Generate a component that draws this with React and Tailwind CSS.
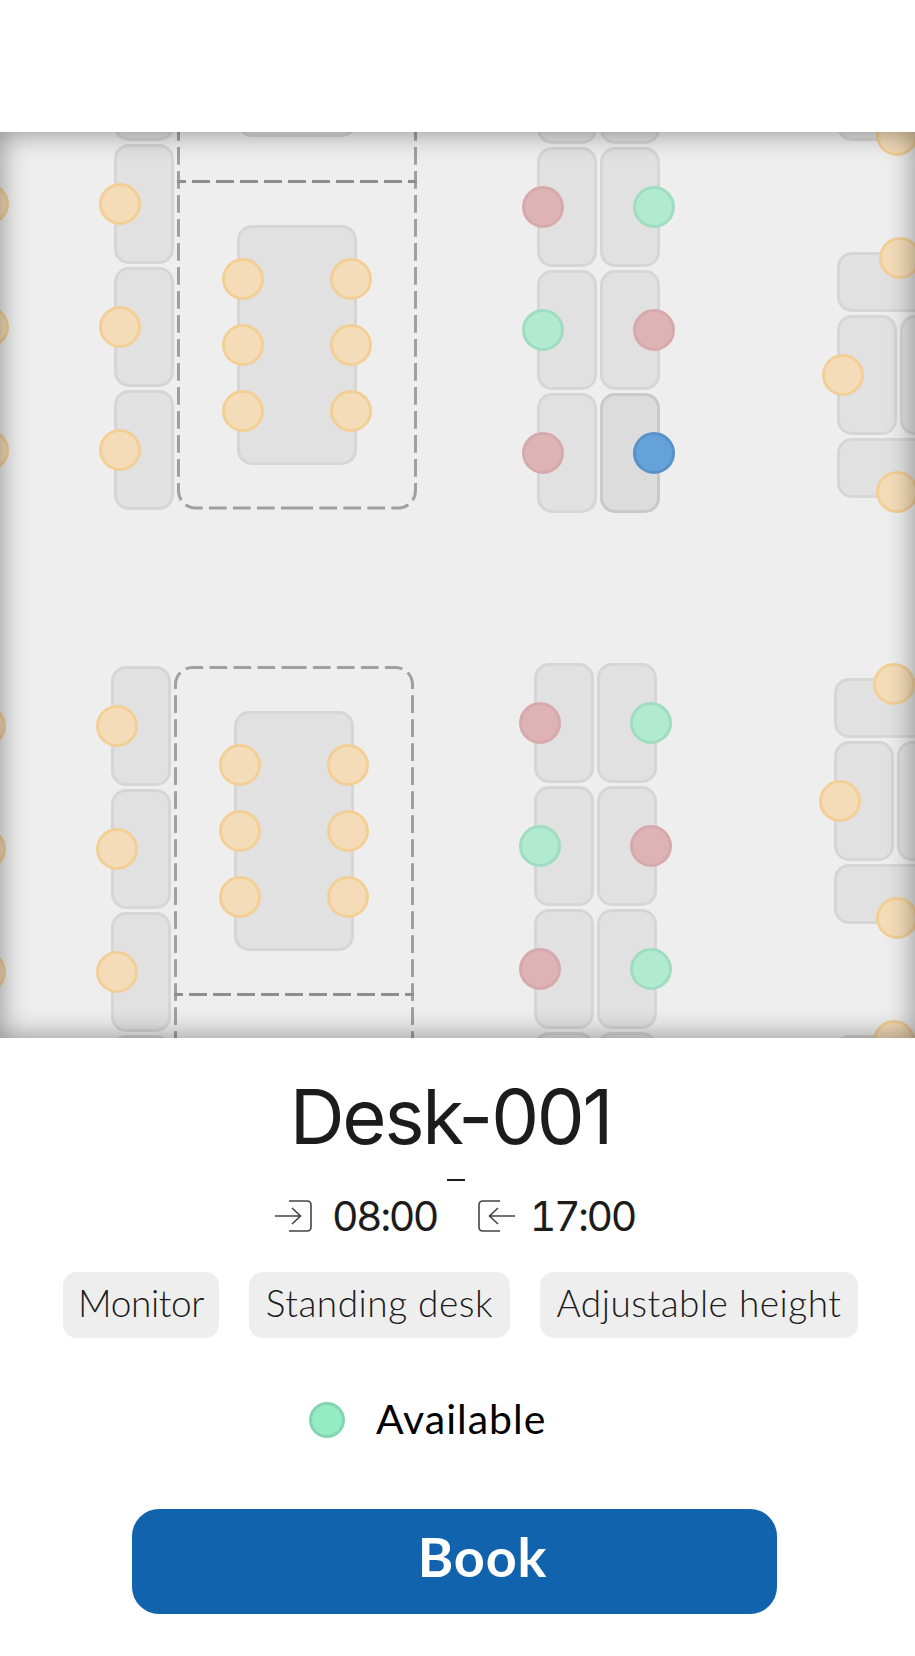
import { useState } from "react";

const MAP_TOP = 132;

const COLORS = {
  busy: "bg-[#ddb3b5] border-[#d6aaac]",
  free: "bg-[#b0ebd1] border-[#a0dcc0]",
  mine: "bg-[#65a2da] border-[#5793c9]",
  off: "bg-[#f4dcb8] border-[#f3cf96]",
};

// page coordinates, x y w h
const desks = [
  [114, 21], [114, 144], [114, 267], [114, 390],
  [537, 24], [600, 24], [537, 147], [600, 147], [537, 270], [600, 270], [537, 393],
  [111, 666], [111, 789], [111, 912], [111, 1035],
  [534, 663], [597, 663], [534, 786], [597, 786], [534, 909], [597, 909], [534, 1032], [597, 1032],
  [837, 315], [900, 315], [834, 741], [897, 741],
].map(([x, y]) => ({ x, y, w: 60, h: 120 }));

const wideDesks = [
  [837, 81], [837, 252], [837, 438], [834, 678], [834, 864], [834, 1035],
].map(([x, y]) => ({ x, y, w: 120, h: 60 }));

const tables = [
  { x: 237, y: -103, w: 120, h: 240 },
  { x: 237, y: 225, w: 120, h: 240 },
  { x: 234, y: 711, w: 120, h: 240 },
];

const dots = [
  // left edge
  [-33, 183, "off"], [-33, 306, "off"], [-33, 429, "off"],
  [-36, 705, "off"], [-36, 828, "off"], [-36, 951, "off"],
  // top left column
  [99, 183, "off"], [99, 306, "off"], [99, 429, "off"],
  // top table
  [222, 258, "off"], [330, 258, "off"], [222, 324, "off"], [330, 324, "off"], [222, 390, "off"], [330, 390, "off"],
  // top middle
  [522, 186, "busy"], [633, 186, "free"], [522, 309, "free"], [633, 309, "busy"], [522, 432, "busy"], [633, 432, "mine"],
  // top right
  [876, 114, "off"], [879, 237, "off"], [822, 354, "off"], [876, 471, "off"],
  // bottom left column
  [96, 705, "off"], [96, 828, "off"], [96, 951, "off"],
  // bottom table
  [219, 744, "off"], [327, 744, "off"], [219, 810, "off"], [327, 810, "off"], [219, 876, "off"], [327, 876, "off"],
  // bottom middle
  [519, 702, "busy"], [630, 702, "free"], [519, 825, "free"], [630, 825, "busy"], [519, 948, "busy"], [630, 948, "free"],
  // bottom right
  [873, 663, "off"], [819, 780, "off"], [876, 897, "off"], [873, 1020, "off"],
];

const features = [
  { label: "Monitor", className: "w-[156px] tracking-[-0.4px]" },
  { label: "Standing desk", className: "w-[261px] tracking-[0.5px]" },
  { label: "Adjustable height", className: "w-[318px] tracking-[0.5px]" },
];

function Desk({ x, y, w, h, selected }) {
  return (
    <div
      className={`absolute rounded-[15px] border-[3px] ${
        selected ? "bg-[#dcdcdc] border-[#c9c9c9]" : "bg-[#e1e1e1] border-[#d6d6d6]"
      }`}
      style={{ left: x, top: y - MAP_TOP, width: w, height: h }}
    />
  );
}

// dashed outlines of the two meeting areas, drawn in page coordinates
function RoomLines() {
  return (
    <svg className="absolute left-0 top-0" width="915" height="906" viewBox="0 132 915 906" fill="none" strokeWidth="3">
      <g stroke="#a0a0a0" strokeDasharray="17.7 6.3">
        <path d="M178.5 123 V491 A17 17 0 0 0 195.5 508 H297" />
        <path d="M415.5 123 V491 A17 17 0 0 1 398.5 508 H297" />
        <path d="M175.5 1337 V684.5 A17 17 0 0 1 192.5 667.5 H294" />
        <path d="M412.5 1337 V684.5 A17 17 0 0 0 395.5 667.5 H294" />
      </g>
      <g stroke="#8e8e8e" strokeDasharray="18 6" strokeDashoffset="9">
        <path d="M177 181.5 H417" />
        <path d="M174 994.5 H414" />
      </g>
    </svg>
  );
}

function Dot({ x, y, kind }) {
  return (
    <div
      className={`absolute w-[42px] h-[42px] rounded-full border-[3px] ${COLORS[kind]}`}
      style={{ left: x, top: y - MAP_TOP }}
    />
  );
}

function EnterIcon() {
  return (
    <svg width="37" height="32" viewBox="0 0 37 32" fill="none" stroke="#444444" strokeWidth="1.6">
      <path d="M0 16 H25 M17 8 L25.5 16 L17 24" />
      <path d="M14 1 H32 Q36 1 36 5 V27 Q36 31 32 31 H14" />
    </svg>
  );
}

function ExitIcon() {
  return (
    <svg width="37" height="32" viewBox="0 0 37 32" fill="none" stroke="#444444" strokeWidth="1.6">
      <path d="M37 16 H12 M20 8 L11.5 16 L20 24" />
      <path d="M22 1 H5 Q1 1 1 5 V27 Q1 31 5 31 H22" />
    </svg>
  );
}

export default function App() {
  const [booked, setBooked] = useState(false);

  return (
    <div className="w-[915px] h-[1656px] bg-white overflow-hidden font-['Lato',sans-serif]">
      <div className="h-[132px]" />

      {/* Floor plan */}
      <div className="relative h-[906px] bg-[#eeeeee] overflow-hidden">
        <RoomLines />
        {desks.map((d, i) => (
          <Desk key={i} {...d} />
        ))}
        <Desk x={600} y={393} w={60} h={120} selected />
        {wideDesks.map((d, i) => (
          <Desk key={i} {...d} />
        ))}
        {tables.map((t, i) => (
          <Desk key={i} {...t} />
        ))}
        {dots.map(([x, y, kind], i) => (
          <Dot key={i} x={x} y={y} kind={kind} />
        ))}
        <div className="absolute inset-0 shadow-[inset_0_0_28px_rgba(0,0,0,0.42)]" />
      </div>

      {/* Desk details */}
      <h1 className="mt-[33px] pr-[14px] text-center text-[76px] leading-[90px] font-normal tracking-[-2.2px] text-[#1c1c1c] font-['Inter',sans-serif]">
        Desk-001
      </h1>
      <div className="flex flex-col items-center font-['Inter',sans-serif] text-[#1c1c1c]">
        <span className="h-[2px] w-[18px] bg-[#1c1c1c] mt-[18px] -ml-[3px]" />
      </div>
      <div className="flex items-center ml-[275px] mt-[19px] font-['Inter',sans-serif] text-[41px] leading-[32px] tracking-[-2.5px] tabular-nums text-[#1c1c1c]">
        <EnterIcon />
        <span className="ml-[20px]">08:00</span>
        <span className="ml-[41px]">
          <ExitIcon />
        </span>
        <span className="ml-[15px]">17:00</span>
      </div>

      {/* Features */}
      <div className="flex gap-[30px] ml-[63px] mt-[40px]">
        {features.map((f) => (
          <span
            key={f.label}
            className={`flex items-center justify-center h-[66px] pb-[4px] rounded-[14px] bg-[#eeeeee] text-[37px] font-light text-[#1c1c1c] ${f.className}`}
          >
            {f.label}
          </span>
        ))}
      </div>

      {/* Status */}
      <div className="flex items-center h-[36px] ml-[309px] mt-[64px]">
        <span className="w-[36px] h-[36px] rounded-full border-[3px] bg-[#93ecc4] border-[#83d6b1]" />
        <span className="ml-[31px] pb-[2px] text-[41px] tracking-[1px] text-black">Available</span>
      </div>

      <button
        type="button"
        onClick={() => setBooked(!booked)}
        className="block ml-[132px] mt-[71px] w-[645px] h-[105px] pl-[56px] pb-[10px] rounded-[27px] bg-[#1263ad] text-white text-[54px] tracking-[0.8px] font-bold"
      >
        Book
      </button>
    </div>
  );
}
